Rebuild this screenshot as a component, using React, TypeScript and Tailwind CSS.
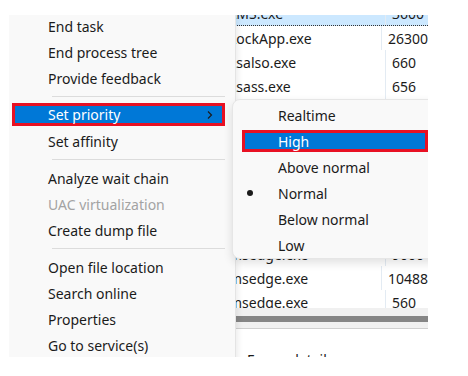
import React from "react";

const font = { fontFamily: '"Noto Sans", "Segoe UI", "Liberation Sans", sans-serif' };

function Sep() {
  return (
    <div className="h-[11px] flex items-center pl-[43px] pr-[10px]">
      <div className="h-px w-full bg-[#dcdcdc]" />
    </div>
  );
}

function Item({ label, disabled }: { label: string; disabled?: boolean }) {
  return (
    <div className={`h-[26px] flex items-center pl-[39px] ${disabled ? "text-[#a3a3a3]" : "text-[#1b1b1b]"}`}>
      {label}
    </div>
  );
}

const rows: [string, string, boolean?][] = [
  ["LMS.exe", "3600", true],
  ["LockApp.exe", "26300"],
  ["Lsalso.exe", "660"],
  ["Lsass.exe", "656"],
  ["Microsoft.exe", "5000"],
  ["Microsoft.exe", "5000"],
  ["Microsoft.exe", "5000"],
  ["Microsoft.exe", "5000"],
  ["Microsoft.exe", "5000"],
  ["Microsoft.exe", "5000"],
  ["msedge.exe", "9000"],
  ["msedge.exe", "10488"],
  ["msedge.exe", "560"],
];

export default function App() {
  return (
    <div className="w-[468px] h-[376px] bg-white relative text-[14px]" style={font}>
      <div className="absolute left-[9px] top-[15px] w-[419px] h-[342px] overflow-hidden bg-white">
        {/* background table */}
        <div className="h-[293px] overflow-hidden">
          <div className="mt-[-13px]">
            {rows.map(([n, p, sel], i) => (
              <div
                key={i}
                className={`h-[24px] flex items-center text-[#1b1b1b] ${sel ? "bg-[#cce8ff] border-b border-dotted border-[#333]" : ""}`}
              >
                <div className="w-[377px] pl-[220px] h-full flex items-center border-r border-[#e3ebf3] whitespace-nowrap overflow-hidden">
                  {n}
                </div>
                <div className="pl-[6px] whitespace-nowrap">{p}</div>
              </div>
            ))}
          </div>
        </div>
        <div className="h-[8px] bg-[#f0f0f0]" />
        <div className="h-[6px] bg-[#858585]" />
        <div className="h-[7px] bg-[#f0f0f0] border-b border-[#cfcfcf]" />
        <div className="pl-[238px] pt-[20px] text-[#1b1b1b]">Fewer details</div>

        {/* main context menu */}
        <div className="absolute left-0 top-[-2px] w-[227px] h-[360px] bg-[#f9f9f9] border-r border-[#e4e4e4] shadow-[2px_0_6px_rgba(0,0,0,0.08)]">
          <Item label="End task" />
          <Item label="End process tree" />
          <Item label="Provide feedback" />
          <Sep />
          <div className="h-[26px] relative">
            <div className="absolute left-[3px] right-[10px] top-[1px] bottom-[2px] border-[3px] border-[#e81123] bg-[#0078d7] flex items-center pl-[33px] pr-[7px] text-white justify-between">
              <span>Set priority</span>
              <svg width="8" height="10" viewBox="0 0 8 10" className="mr-[1px]">
                <path d="M2 1.5 L5.5 5 L2 8.5" fill="none" stroke="#1b1b1b" strokeWidth="1.2" />
              </svg>
            </div>
          </div>
          <Item label="Set affinity" />
          <Sep />
          <Item label="Analyze wait chain" />
          <Item label="UAC virtualization" disabled />
          <Item label="Create dump file" />
          <Sep />
          <Item label="Open file location" />
          <Item label="Search online" />
          <Item label="Properties" />
          <Item label="Go to service(s)" />
        </div>

        {/* submenu */}
        <div className="absolute left-[223px] top-[84px] w-[220px] h-[160px] bg-[#f9f9f9] rounded-[8px] border border-[#e6e6e6] shadow-[0_4px_10px_rgba(0,0,0,0.12)] pt-[2px]">
          <div className="h-[26px] flex items-center pl-[45px] text-[#1b1b1b]">Realtime</div>
          <div className="h-[26px] relative">
            <div className="absolute left-[9px] w-[186px] top-[2px] h-[22px] border-[3px] border-[#e81123] bg-[#0078d7] flex items-center pl-[33px] text-white">
              High
            </div>
          </div>
          <div className="h-[26px] flex items-center pl-[45px] text-[#1b1b1b]">Above normal</div>
          <div className="h-[26px] flex items-center pl-[45px] text-[#1b1b1b] relative">
            <span className="absolute left-[14px] top-[10px] w-[6px] h-[6px] rounded-full bg-[#1b1b1b]" />
            Normal
          </div>
          <div className="h-[26px] flex items-center pl-[45px] text-[#1b1b1b]">Below normal</div>
          <div className="h-[26px] flex items-center pl-[45px] text-[#1b1b1b]">Low</div>
        </div>
      </div>
    </div>
  );
}
